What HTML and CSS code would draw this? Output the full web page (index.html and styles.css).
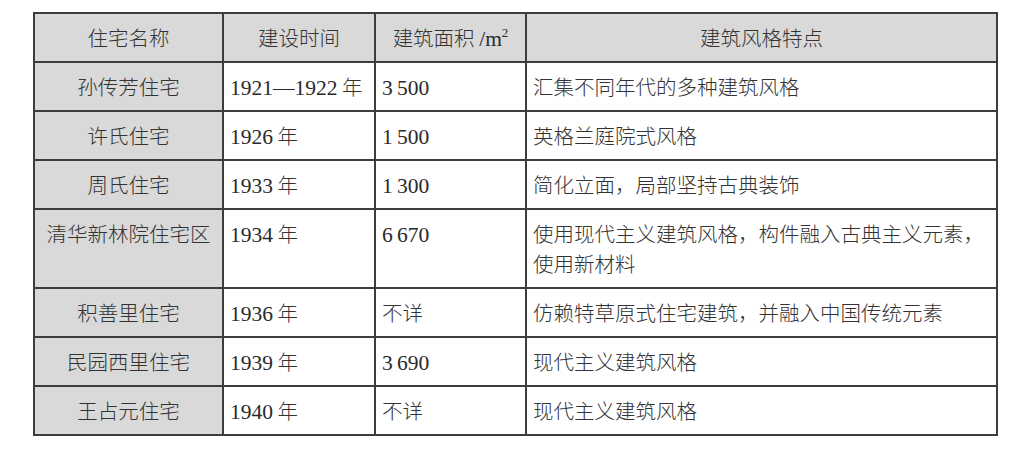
FILE: index.html
```html
<!DOCTYPE html>
<html lang="zh-CN">
<head>
<meta charset="utf-8">
<title>住宅建筑风格</title>
<link rel="stylesheet" href="styles.css">
</head>
<body>
<table class="data">
  <colgroup>
    <col class="c1"><col class="c2"><col class="c3"><col class="c4">
  </colgroup>
  <thead>
    <tr class="row">
      <th>住宅名称</th>
      <th>建设时间</th>
      <th>建筑面积 <span class="num">/m<sup>2</sup></span></th>
      <th>建筑风格特点</th>
    </tr>
  </thead>
  <tbody>
    <tr class="row">
      <td class="name">孙传芳住宅</td>
      <td><span class="num">1921—1922</span> 年</td>
      <td><span class="num">3&#8201;500</span></td>
      <td>汇集不同年代的多种建筑风格</td>
    </tr>
    <tr class="row">
      <td class="name">许氏住宅</td>
      <td><span class="num">1926</span> 年</td>
      <td><span class="num">1&#8201;500</span></td>
      <td>英格兰庭院式风格</td>
    </tr>
    <tr class="row">
      <td class="name">周氏住宅</td>
      <td><span class="num">1933</span> 年</td>
      <td><span class="num">1&#8201;300</span></td>
      <td>简化立面，局部坚持古典装饰</td>
    </tr>
    <tr class="row tall">
      <td class="name">清华新林院住宅区</td>
      <td><span class="num">1934</span> 年</td>
      <td><span class="num">6&#8201;670</span></td>
      <td>使用现代主义建筑风格，构件融入古典主义元素，<br>使用新材料</td>
    </tr>
    <tr class="row">
      <td class="name">积善里住宅</td>
      <td><span class="num">1936</span> 年</td>
      <td>不详</td>
      <td>仿赖特草原式住宅建筑，并融入中国传统元素</td>
    </tr>
    <tr class="row">
      <td class="name">民园西里住宅</td>
      <td><span class="num">1939</span> 年</td>
      <td><span class="num">3&#8201;690</span></td>
      <td>现代主义建筑风格</td>
    </tr>
    <tr class="row">
      <td class="name">王占元住宅</td>
      <td><span class="num">1940</span> 年</td>
      <td>不详</td>
      <td>现代主义建筑风格</td>
    </tr>
  </tbody>
</table>
</body>
</html>
```

FILE: styles.css
```css
html, body {
  margin: 0;
  padding: 0;
  background: #ffffff;
}

body {
  padding: 12px 0 0 33px;
  font-family: "Noto Sans CJK SC", "Noto Sans", sans-serif;
  color: #333333;
}

.data {
  border-collapse: separate;
  border-spacing: 0;
  table-layout: fixed;
  width: 965px;
  border-top: 2px solid #3d3d3d;
  border-left: 2px solid #3d3d3d;
  font-size: 20.5px;
  line-height: 30px;
}

.c1 { width: 189px; }
.c2 { width: 152px; }
.c3 { width: 151px; }
.c4 { width: 471px; }

.row { height: 49px; }
.row.tall { height: 79px; }

.data th,
.data td {
  border-right: 2px solid #3d3d3d;
  border-bottom: 2px solid #3d3d3d;
  padding: 8px 0 0 6px;
  vertical-align: top;
  text-align: left;
  font-weight: 300;
  white-space: nowrap;
}

.data th {
  background: #d9d9d9;
  text-align: center;
  padding-left: 0;
}

.data td.name {
  background: #d9d9d9;
  text-align: center;
  padding-left: 0;
}

.num {
  font-family: "Liberation Serif", "Noto Sans CJK SC", serif;
  font-size: 21.5px;
  font-weight: 400;
  color: #2a2a2a;
}

.num sup {
  font-size: 13px;
  line-height: 0;
  vertical-align: 9px;
}
```
